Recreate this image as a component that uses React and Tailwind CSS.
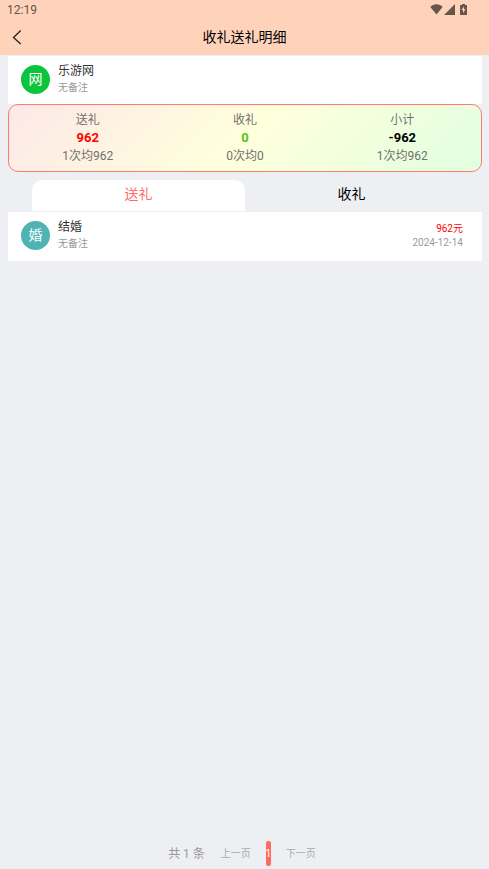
import React, { useState } from "react";

const stats = [
  { label: "送礼", total: "962", detail: "1次均962", color: "text-[#ff0000]" },
  { label: "收礼", total: "0", detail: "0次均0", color: "text-[#52c41a]" },
  { label: "小计", total: "-962", detail: "1次均962", color: "text-black" },
];

const tabs = ["送礼", "收礼"];

const StatusBar = () => {
  return (
    <div className="flex h-5 items-center justify-between pl-[7px] pr-[22px] text-[#66564b]">
      <span className="text-xs leading-5">12:19</span>
      <div className="flex items-center pb-px">
        <svg width="13" height="11" viewBox="0 0 13 11" fill="currentColor" aria-hidden="true">
          <path d="M6.5 10.5 0.3 3C2 1.2 4.100 0.300 6.500 0.300S11 1.200 12.700 3Z" />
        </svg>
        <svg width="11" height="11" viewBox="0 0 11 11" fill="currentColor" className="ml-px" aria-hidden="true">
          <path d="M11 0v11H0Z" />
        </svg>
        <svg width="7" height="11" viewBox="0 0 7 11" className="ml-[5px]" aria-hidden="true">
          <path fill="currentColor" d="M2 0h3v1h2v10H0V1h2Z" />
          <path fill="#ffd3ba" d="M4 2.500 1.500 6H3v3.200L5.500 5.300H4Z" />
        </svg>
      </div>
    </div>
  );
};

const Person = ({ letter, name, color, children }) => {
  return (
    <div className="flex items-start bg-white pl-[13px] pr-[19px] pt-[9px]">
      <div className={`flex size-[29px] shrink-0 justify-center rounded-full text-sm leading-[28px] text-white ${color}`}>
        {letter}
      </div>
      <div className="-mt-1 ml-2 flex-1">
        <h2 className="text-xs leading-5 text-[#303133]">{name}</h2>
        <p className="text-[10px] leading-[14px] text-[#999]">无备注</p>
      </div>
      {children}
    </div>
  );
};

const App = () => {
  const [active, setActive] = useState("送礼");

  return (
    <div className="flex min-h-screen flex-col bg-[#eeeff3] font-['Roboto','Noto_Sans_CJK_SC',sans-serif]">
      <header className="bg-[#ffd3ba]">
        <StatusBar />
        <div className="grid h-[35px] grid-cols-[40px_1fr_40px] items-center pb-[2px]">
          <button aria-label="返回" className="flex h-full items-center pl-3">
            <svg width="10" height="16" viewBox="0 0 10 16" fill="none" stroke="#222" strokeWidth="1.3" aria-hidden="true">
              <path d="M8.700 1.500 1.500 8.500 8.700 15" />
            </svg>
          </button>
          <h1 className="text-center text-sm text-black">收礼送礼明细</h1>
        </div>
      </header>

      <main className="ml-2 mr-[7px] mt-px flex-1">
        <div className="h-12 bg-white">
          <Person letter="网" name="乐游网" color="bg-[#0bc43c]" />
        </div>

        {/* totals */}
        <section className="grid h-[68px] grid-cols-3 rounded-[10px] border border-[#ff7b72] bg-[linear-gradient(135deg,#fde8e8,#ffffdc_50%,#e0ffe0)] pt-[6px] text-center">
          {stats.map((s) => (
            <div key={s.label} className="text-xs leading-[18px] text-[#707070]">
              <p>{s.label}</p>
              <p className={`text-[13px] font-bold leading-[18px] ${s.color}`}>{s.total}</p>
              <p>{s.detail}</p>
            </div>
          ))}
        </section>

        <div role="tablist" className="mx-6 mb-px mt-2 grid grid-cols-2">
          {tabs.map((t) => (
            <button
              key={t}
              role="tab"
              aria-selected={active === t}
              onClick={() => setActive(t)}
              className={`h-[31px] rounded-t-[10px] pb-[3px] text-sm ${
                active === t ? "bg-white text-[#ff6f66]" : "text-black"
              }`}
            >
              {t}
            </button>
          ))}
        </div>

        <div className="h-[49px] bg-white">
          <Person letter="婚" name="结婚" color="bg-[#4db3b3]">
            <div className="pt-px text-right text-[10px] leading-[14px]">
              <p className="text-[#ff0000]">962元</p>
              <p className="text-[#999]">2024-12-14</p>
            </div>
          </Person>
        </div>
      </main>

      <nav className="mb-[3px] flex h-[25px] items-center justify-center pr-[5px] text-[10px] text-[#a8abb2]">
        <span className="text-xs text-[#999]">共 1 条</span>
        <button className="ml-4">上一页</button>
        <button className="mx-[15px] flex h-[25px] w-[5px] items-center justify-center rounded-xs bg-[#ff6b60] text-white">
          1
        </button>
        <button>下一页</button>
      </nav>
    </div>
  );
};

export default App;
